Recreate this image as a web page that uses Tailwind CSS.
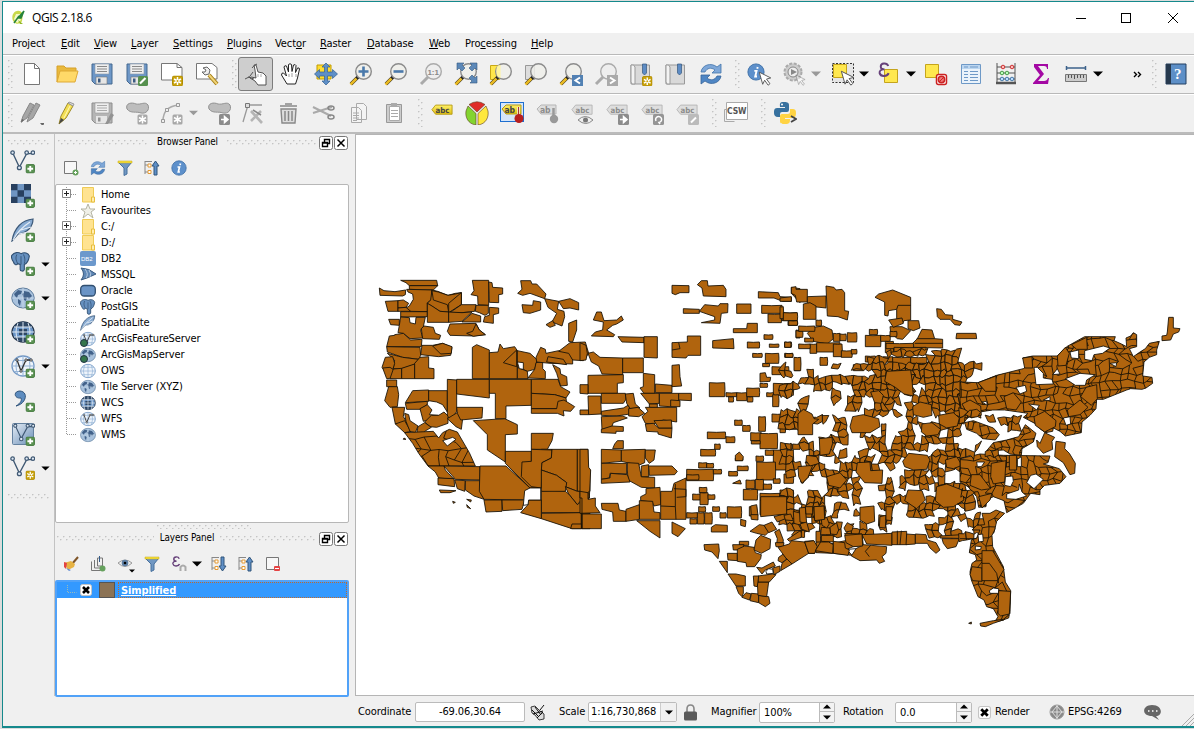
<!DOCTYPE html>
<html lang="en"><head><meta charset="utf-8"><title>QGIS 2.18.6</title>
<script src="https://cdn.jsdelivr.net/npm/@tailwindcss/browser@4"></script></head>
<body class="w-[1194px] h-[729px] overflow-hidden bg-[#dcdcdc] font-['DejaVu_Sans_Condensed','DejaVu_Sans',sans-serif] [font-stretch:condensed] text-[11px] tracking-[-0.1px] text-black">
<svg class="absolute size-0">
<defs>
<pattern id="gv" width="6" height="6" patternUnits="userSpaceOnUse"><path d="M0 0h2v2H0zM3 3h2v2H3z" fill="#fff"/><path d="M0 0h1.6v1.6H0zM3 3h1.6v1.6H3z" fill="#c4c4c4"/></pattern>
<linearGradient id="gy" x2="0" y2="1"><stop stop-color="#fff06a"/><stop offset="1" stop-color="#e0c010"/></linearGradient>
<linearGradient id="gb" x1="0" y1="0" x2="1" y2="1"><stop stop-color="#e6edf5"/><stop offset="1" stop-color="#6a8fb8"/></linearGradient>
<symbol id="plus" viewBox="0 0 10 10"><rect x=".5" y=".5" width="9" height="9" rx="1.5" fill="#5a9152" stroke="#4a7d44"/><path d="M5 2v6M2 5h6" stroke="#fff" stroke-width="2"/></symbol>
<symbol id="star" viewBox="0 0 11 11"><rect x=".5" y=".5" width="10" height="10" rx="1.5" fill="#c9a20c" stroke="#b08c00"/><path d="M5.5 1.5v8M2 3.5l7 4M9 3.5l-7 4" stroke="#fff" stroke-width="1.5"/><circle cx="5.500" cy="5.500" r="1" fill="#c9a20c"/></symbol>
<symbol id="gstar" viewBox="0 0 11 11"><rect x=".5" y=".5" width="10" height="10" rx="1.500" fill="#a8a8a8"/><path d="M5.500 1.500v8M2 3.500l7 4M9 3.500l-7 4" stroke="#fff" stroke-width="1.500"/></symbol>
<symbol id="arr" viewBox="0 0 11 11"><rect width="11" height="11" rx="1.500" fill="#8c8c8c"/><path d="M2 5.500h4M5.500 2.500L9 5.500 5.500 8.500z" fill="#fff" stroke="#fff" stroke-width="1.500"/></symbol>
<symbol id="floppy" viewBox="0 0 24 24"><path d="M2 2h20v20H5l-3-3z" fill="#6d97c8" stroke="#45688f"/><path d="M5 2h14v10H5z" fill="#eee" stroke="#8a99a8" stroke-width=".6"/><path d="M7 4.500h10M7 7h10M7 9.500h10" stroke="#888"/><path d="M6 15h11v7H6z" fill="#e6e6e6" stroke="#777" stroke-width=".6"/><path d="M8 16.500h2.500v4H8z" fill="#3b5a80"/></symbol>
<symbol id="gfloppy" viewBox="0 0 24 24"><path d="M2 2h20v20H5l-3-3z" fill="#b5b5b5" stroke="#8d8d8d"/><path d="M5 2h14v10H5z" fill="#eee" stroke="#999" stroke-width=".6"/><path d="M7 4.500h10M7 7h10M7 9.500h10" stroke="#aaa"/><path d="M6 15h11v7H6z" fill="#e6e6e6"/><path d="M8 16.500h2.500v4H8zM15 23l6-11 3 2-6 9z" fill="#929292"/></symbol>
<symbol id="mag" viewBox="0 0 24 24"><path d="M2 22l7-7" stroke="#222" stroke-width="3.500"/><path d="M1.500 22.500l6-6" stroke="#e8b923" stroke-width="2.600"/><circle cx="14.500" cy="9.500" r="7.800" fill="#eeeeea" fill-opacity=".85" stroke="#8b8b8b" stroke-width="1.400"/></symbol>
<symbol id="gmag" viewBox="0 0 24 24"><path d="M2 22l7-7" stroke="#aaa" stroke-width="3"/><circle cx="14.500" cy="9.500" r="7.800" fill="#eee" stroke="#aaa" stroke-width="1.400"/></symbol>
<symbol id="refresh" viewBox="0 0 24 24"><path d="M2 10C3 3 12 0 18 5l4-3v9h-9l3-3c-4-3-8-2-10 2z" fill="#7ea7d8" stroke="#4375ab" stroke-width=".8"/><path d="M22 14c-1 7-10 10-16 5l-4 3v-9h9l-3 3c4 3 8 2 10-2z" fill="#4f86c4" stroke="#39669b" stroke-width=".8"/></symbol>
<symbol id="info" viewBox="0 0 16 16"><circle cx="8" cy="8" r="7.200" fill="#5d90cb" stroke="#3d6fa6" stroke-width=".8"/><path d="M9.500 3.500l-.4 1.600M6.500 7h2L7.300 12h1.600" stroke="#fff" stroke-width="1.700" fill="none"/></symbol>
<symbol id="cursor" viewBox="0 0 12 13"><path d="M1 1l10 5-3.700 1 3 4-1.600 1.300L5.700 8 4 11.500z" fill="#fff" stroke="#555" stroke-width=".8"/></symbol>
<symbol id="book" viewBox="0 0 24 24"><path d="M2 3h18.500v19H2z" fill="#d9d9d9" stroke="#999"/><path d="M2 3q3-1 4 2v17H3L2 20z" fill="#f3f3f3" stroke="#999"/><path d="M13.500 2h4v9l-2 2-2-2z" fill="#5e8cc4" stroke="#33587f" stroke-width=".7"/></symbol>
<symbol id="tag" viewBox="0 0 24 16"><path d="M1 6l4-5h18v10H5z" fill="url(#gy)" stroke="#b59a16"/><text x="5" y="9.500" font-size="8.500" font-weight="bold" font-family="DejaVu Sans Condensed" fill="#444">abc</text></symbol>
<symbol id="gtag" viewBox="0 0 24 16"><path d="M1 6l4-5h18v10H5z" fill="#dedede" stroke="#b5b5b5"/><text x="5" y="9.500" font-size="8.500" font-weight="bold" font-family="DejaVu Sans Condensed" fill="#8c8c8c">abc</text></symbol>
<symbol id="blob" viewBox="0 0 24 24"><path d="M2 8C0 2 7 1 11 3c5 1 9-3 12 1 2 5-2 9-7 8C11 10 6 13 2 8z" fill="#bdbdbd" stroke="#929292"/></symbol>
<symbol id="vec" viewBox="0 0 24 24"><path d="M3 4.500l6 13L16 4.500h6" fill="none" stroke="#3f5873" stroke-width="1.300"/><g fill="#dfe9f4" stroke="#3f5873" stroke-width="1.200"><circle cx="2.500" cy="3.500" r="1.700"/><circle cx="16" cy="3.500" r="1.700"/><circle cx="22" cy="3.500" r="1.700"/><circle cx="9" cy="18" r="1.900"/></g></symbol>
<symbol id="raster" viewBox="0 0 24 24"><path d="M0 0h20v19H0z" fill="#6f95c2"/><path d="M0 0h6.500v6.300H0zM13 0h7v6.300h-7zM6.500 6.300H13v6.400H6.500zM0 12.700h6.500V19H0zM13 12.700h7V19h-7z" fill="#28405f"/></symbol>
<symbol id="feather" viewBox="0 0 24 24"><path d="M1 23C3 10 11 2 22 1c0 7-5 14-15 15L1 23z" fill="#88abd2" stroke="#3b5878" stroke-width="1.200"/><path d="M2 22Q8 11 19 4M8 16l9-2M10 12l10-3" stroke="#e3ecf5" stroke-width="1.200" fill="none"/></symbol>
<symbol id="eleph" viewBox="0 0 24 24"><path d="M1 4C4 0 9 0 12 2c4-2 9-1 10 3-1 6-3 9-6 10v6c-1 3-5 2-5 0v-6L8 14c-1 2-4 2-5-2C1 9 0 6 1 4z" fill="#6690bf" stroke="#304f71" stroke-width="1.300"/><path d="M7 3c-2 4-1 7 1 11M15 3c2 4 2 7 1 11M12 5v10" fill="none" stroke="#304f71"/></symbol>
<symbol id="globe" viewBox="0 0 24 24"><ellipse cx="12" cy="12" rx="11.200" ry="10" fill="#a9c2dd" stroke="#5e7d9d"/><path d="M3 8l4-4 4 1-1 3-3 1-1 3-2-2zM7 13l3 2-1 5-2-3zM13 5l5 1 3 4-3 3-2-2-1 4-2-1-1-4-1-2 2-1z" fill="#42628a"/><path d="M1 12h22M12 2v20" stroke="#d6e3f0" stroke-width=".6"/></symbol>
<symbol id="wgrid" viewBox="0 0 24 24"><ellipse cx="12" cy="12" rx="11" ry="10" fill="#eef4fb" stroke="#7499c5" stroke-width="1.300"/><path d="M1 12h22M3 6.500h18M3 17.500h18M12 2v20M7 3q-4 9 0 18M17 3q4 9 0 18" fill="none" stroke="#94b3d6"/></symbol>
<symbol id="dgrid" viewBox="0 0 24 24"><ellipse cx="12" cy="12" rx="11" ry="10" fill="#6b95c7" stroke="#24354b" stroke-width="1.300"/><path d="M4 5q8-7 16 0l1 2H3zM8 9h8v6H8zM3 17h18q-8 9-18 0z" fill="#2e4765"/><path d="M1 12h22M3 7h18M3 17h18M12 2v20M7 3q-4 9 0 18M17 3q4 9 0 18" fill="none" stroke="#dce7f2"/></symbol>
<symbol id="wv" viewBox="0 0 24 24"><use href="#wgrid"/><path d="M6 6l4 11 5-11h5" fill="none" stroke="#333" stroke-width="1.300"/><path d="M5 5h2v2H5zM14 5h2v2h-2zM19 5h2v2h-2zM9 16h2v2H9z" fill="#fff" stroke="#333" stroke-width=".8"/></symbol>
<symbol id="folder" viewBox="0 0 16 16"><path d="M2.500.5h11v9l1 1v4.500h-12z" fill="#ffe391" stroke="#efcb55"/><path d="M11.500 15v-5h3v5z" fill="#ffedb0" stroke="#e8be3c"/></symbol>
<symbol id="funnel" viewBox="0 0 16 16"><path d="M1.500 2.500h13L10 8v6l-3 1.500V8z" fill="#7097c2" stroke="#47709d"/><path d="M1 1h14v2H1z" fill="#f9e23c" stroke="#c0a717" stroke-width=".5"/></symbol>
<symbol id="tree" viewBox="0 0 16 16"><path d="M1 1v13M1 5h4M1 12h4M1 1.500h7" stroke="#888" fill="none"/><path d="M4 4h3v3H4zM4 10.500h3v3H4z" fill="#fff" stroke="#e69a32"/></symbol>
<symbol id="eps" viewBox="0 0 20 22"><path d="M15 5C13 0 5 1 5 5.500 5 8 7 9.500 10 9.500 5 9 3 12 3.500 14.500 5 20 14 19 15.500 14.500" fill="none" stroke="#67417a" stroke-width="2.600"/></symbol>
<symbol id="tri" viewBox="0 0 10 6"><path d="M0 .5h10L5 5.500z"/></symbol>
<symbol id="box" viewBox="0 0 12 12"><rect x=".5" y=".5" width="11" height="11" rx="2" fill="#fff" stroke="#c5c5c5"/><path d="M3 3l6 6M9 3L3 9" stroke="#000" stroke-width="2.600"/></symbol>
</defs></svg>

<div class="relative ml-[2px] mt-px w-[1192px] h-[727px] border-l border-t border-b-2 border-[#15898c] bg-[#f0f0f0] flex flex-col">
<header class="h-[31px] shrink-0 bg-white flex items-center font-['Open_Sans','Noto_Sans',sans-serif] [font-stretch:normal] text-[12px]">
<svg class="w-[13px] h-[15px] ml-[9px]" viewBox="0 0 13 15"><path d="M5 1C0 2-1 9 2 12c2 3 7 2 8-1L11 4C9 1 7 0 5 1z" fill="#c9d94b"/><path d="M4 4l-2 5 3 4 4-3-2-3 2-3z" fill="#f4f9c9"/><path d="M6 8l6-7-3 7zM2 13l5-7" stroke="#26833b" stroke-width="1.500" fill="#26833b"/><path d="M6 10l5 4h-3z" fill="#94b82c"/></svg>
<span class="ml-[7px] tracking-[-0.45px] w-[200px]">QGIS 2.18.6</span>
<svg class="ml-auto mr-[14px] w-[104px] h-[12px]" viewBox="0 0 104 12" fill="none" stroke="#000" shape-rendering="crispEdges"><path d="M0 6.500h10"/><rect x="45.500" y="1.500" width="9" height="9"/><path d="M92 1l10 10M102 1L92 11" shape-rendering="auto"/></svg>
</header>
<nav class="h-[21px] shrink-0 flex items-center pt-px pl-[9px] whitespace-nowrap">
<span class="w-[49px]">Pro<u>j</u>ect</span><span class="w-[33px]"><u>E</u>dit</span><span class="w-[37px]"><u>V</u>iew</span><span class="w-[42px]"><u>L</u>ayer</span><span class="w-[54px]"><u>S</u>ettings</span><span class="w-[48px]"><u>P</u>lugins</span><span class="w-[45px]">Vect<u>o</u>r</span><span class="w-[47px]"><u>R</u>aster</span><span class="w-[62px]"><u>D</u>atabase</span><span class="w-[36px]"><u>W</u>eb</span><span class="w-[66px]">Pro<u>c</u>essing</span><span><u>H</u>elp</span>
</nav>
<div class="h-[39px] shrink-0 border-t border-[#b9b9b9] shadow-[inset_0_1px_#fff] flex items-center [&>div]:w-[35px] [&>div]:h-[34px] [&>div]:shrink-0 [&>div]:flex [&>div]:items-center [&>div]:justify-center [&>div>svg]:size-6 [&>svg]:shrink-0">
<svg class="ml-[5px] w-[6px] h-[28px]"><rect width="6" height="28" fill="url(#gv)"/></svg>
<div><svg viewBox="0 0 24 24"><path d="M4.500 1.500h10l5 5v16h-15z" fill="#fff" stroke="#777"/><path d="M14.500 1.500v5h5" fill="none" stroke="#777"/></svg></div>
<div><svg viewBox="0 0 24 24"><path d="M2 20V4h7l2 2h10v4" fill="#e9b93d" stroke="#d6a12a"/><path d="M2 20L5 9h18l-3 11z" fill="#ffd968" stroke="#dea934"/></svg></div>
<div><svg><use href="#floppy"/></svg></div>
<div><svg viewBox="0 0 24 24"><use href="#floppy"/><rect x="13" y="14" width="10" height="10" rx="1.500" fill="#56904e"/><path d="M15 21.500l5.500-5.500" stroke="#fff" stroke-width="2.200"/></svg></div>
<div><svg viewBox="0 0 24 24"><path d="M1.500 1.500H17l5 4v12.500H1.500z" fill="#fff" stroke="#777"/><path d="M17 1.500v4h5" fill="none" stroke="#777"/><use href="#star" x="12" y="13.500" width="11" height="11"/></svg></div>
<div><svg viewBox="0 0 24 24"><path d="M1.500 1.500H17l5 4v11.500H1.500z" fill="#fff" stroke="#777"/><path d="M14 13l8 9" stroke="#a47d12" stroke-width="4"/><path d="M14 13l8 9" stroke="#f0d377" stroke-width="2"/><path d="M8 6l4-1 3 3-1 4-4 1-3-3 3 0 1-2z" fill="#eee" stroke="#666"/></svg></div>
<svg class="ml-[8px] w-[6px] h-[28px]"><rect width="6" height="28" fill="url(#gv)"/></svg>
<div class="rounded-[3px] border border-[#7d7d7d] bg-[#cecece]"><svg viewBox="0 0 24 24"><path d="M11 8l-1-5 2 0 2 7 5 1 3 3v9h-8l-3-4-5-3 1-1 5 1z" fill="#fff" stroke="#444" stroke-width=".9"/><path d="M1 17q5-1 8-7M8 6q2-3 5-4M4 15l6 2" stroke="#555" fill="none"/><path d="M14 12v3M17 12v3" stroke="#888" stroke-width=".7"/></svg></div>
<div><svg viewBox="0 0 24 24"><path d="M8 22L2.500 13q0-2.500 2-2l3 3L5 5q.5-2 2.500-1l2 6V2.500q1.500-1.500 3 0l.5 7 1.500-6.500q2-1 2.500.5l-.5 7 2-4.500q2-.5 2 1l-2 9-2 6z" fill="#fff" stroke="#222"/><path d="M10 12v3M13 11v4M17 12v3" stroke="#777" stroke-width=".7"/></svg></div>
<div><svg viewBox="0 0 24 24"><path d="M3 3h14v14H3z" fill="#ffdc30" stroke="#c09b00"/><path d="M12 1l4 4h-2.500v5H18.500V7.500l5 4.500-5 4.500V14h-5v5H16l-4 4-4-4h2.500v-5h-5v2.500L.5 12l5-4.500V10h5V5H8z" fill="#5e8fc8" stroke="#32608f" stroke-width=".7"/></svg></div>
<div><svg viewBox="0 0 24 24"><use href="#mag"/><path d="M14.500 4.500v10M9.500 9.500h10" stroke="#4a79ab" stroke-width="2.600"/></svg></div>
<div><svg viewBox="0 0 24 24"><use href="#mag"/><path d="M9.500 9.500h10" stroke="#4a79ab" stroke-width="2.600"/></svg></div>
<div><svg viewBox="0 0 24 24"><use href="#gmag"/><text x="8.500" y="12.500" font-size="8" font-weight="bold" font-family="Liberation Sans" fill="#888">1:1</text></svg></div>
<div><svg viewBox="0 0 24 24"><use href="#mag"/><path d="M3 1h7L8 3l3 3-3 3-3-3-2 2zM23 1h-7l2 2-3 3 3 3 3-3 2 2zM23 21h-7l2-2-3-3 3-3 3 3 2-2z" fill="#5c88b8" stroke="#34597f" stroke-width=".6"/></svg></div>
<div><svg viewBox="0 0 24 24"><path d="M1.500 3.500h9v14h-9z" fill="#ffe74b" stroke="#c8a817"/><use href="#mag"/><path d="M7.500 7q0-4 4-4v13q-4-1-4-5z" fill="#fff5a0"/></svg></div>
<div><svg viewBox="0 0 24 24"><path d="M1.500 3.500h9v14h-9z" fill="#ddd" stroke="#999"/><use href="#mag"/></svg></div>
<div><svg viewBox="0 0 24 24"><use href="#mag"/><rect x="13" y="13" width="11" height="11" fill="#5281b3"/><path d="M21 15.500l-4.500 3 4.500 3" stroke="#fff" stroke-width="2" fill="none"/></svg></div>
<div><svg viewBox="0 0 24 24"><use href="#gmag"/><rect x="13" y="13" width="11" height="11" fill="#aaa"/><path d="M16 15.500l4.500 3-4.500 3" stroke="#fff" stroke-width="2" fill="none"/></svg></div>
<div><svg viewBox="0 0 24 24"><use href="#book"/><use href="#star" x="13" y="14" width="10.500" height="10.500"/></svg></div>
<div><svg><use href="#book"/></svg></div><div><svg><use href="#refresh"/></svg></div>
<svg class="ml-[7px] w-[6px] h-[28px]"><rect width="6" height="28" fill="url(#gv)"/></svg>
<div><svg viewBox="0 0 24 24"><use href="#info" x="0" y="1" width="18" height="18"/><use href="#cursor" x="11" y="9" width="14" height="15"/></svg></div>
<div><svg viewBox="0 0 24 24"><circle cx="11" cy="10" r="8.500" fill="#ccc" stroke="#aaa" stroke-width="2" stroke-dasharray="3 1.500"/><circle cx="11" cy="10" r="5" fill="#eee" stroke="#888"/><path d="M9 7l6 3-6 3z" fill="#888"/><use href="#cursor" x="13" y="12" width="11" height="12" opacity=".5"/></svg></div>
<svg class="w-[10px] h-[6px] mr-[4px]" fill="#999"><use href="#tri"/></svg>
<div><svg viewBox="0 0 24 24"><path d="M1.500 1.500h21v19h-21z" fill="#e5e5e5" stroke="#333" stroke-dasharray="2 1.500"/><path d="M2.500 2.500h13v13h-13z" fill="#ffe84f" stroke="#c5a41c"/><use href="#cursor" x="9" y="8" width="15" height="16"/></svg></div>
<svg class="-ml-px mr-[2px] w-[10px] h-[6px]"><use href="#tri"/></svg>
<div><svg viewBox="0 0 24 24"><path d="M7.500 7.500h13v13h-13z" fill="#ffe84f" stroke="#c5a41c"/><use href="#eps" x="0" y="0" width="15" height="17"/></svg></div>
<svg class="mr-[2px] w-[10px] h-[6px]"><use href="#tri"/></svg>
<div><svg viewBox="0 0 24 24"><path d="M1.500 2.500h13v13h-13z" fill="#ffe84f" stroke="#c5a41c"/><rect x="12.500" y="12.500" width="10" height="10" rx="2" fill="#fff" stroke="#c22" stroke-width="1.500"/><circle cx="17.500" cy="17.500" r="3.200" fill="#e77" stroke="#c22" stroke-width="1.500"/><path d="M15 20l5-5" stroke="#c22"/></svg></div>
<div><svg viewBox="0 0 24 24"><path d="M2.500 2.500h19v19h-19z" fill="#eaf3fb" stroke="#6e99c7"/><path d="M3 3h18v4H3z" fill="#bcd6f0"/><path d="M5 5h4M11 5h8M5 9.500h4M11 9.500h8M5 12.500h4M11 12.500h8M5 15.500h4M11 15.500h8M5 18.500h4M11 18.500h8" stroke="#6e99c7"/></svg></div>
<div><svg viewBox="0 0 24 24"><path d="M3 1v20M21 1v20M3 5h18M3 11h18M3 17h18" stroke="#555"/><path d="M2 21h20" stroke="#555" stroke-width="2.500"/><g stroke-width="1" fill="#fbb" stroke="#c33"><circle cx="9" cy="5" r="1.800"/><circle cx="18" cy="5" r="1.800"/><g fill="#bfb" stroke="#4a9a4a"><circle cx="8" cy="11" r="1.800"/><circle cx="13" cy="11" r="1.800"/></g><g fill="#bdf" stroke="#4678a8"><circle cx="8" cy="17" r="1.800"/><circle cx="13" cy="17" r="1.800"/><circle cx="18" cy="17" r="1.800"/></g></g></svg></div>
<div><svg viewBox="0 0 24 24"><path d="M5 2h14v5h-1q0-3-3-3H9l6 8-6 7h6q3 0 4-3h1l-1 6H4v-1l7-8-6-8z" fill="#a308a3"/></svg></div>
<div><svg viewBox="0 0 24 24"><path d="M2 6h20M2.500 4v4M21.500 4v4" stroke="#3d628a" stroke-width="1.500"/><path d="M1.500 12.500h21v7h-21z" fill="#ccc" stroke="#777"/><path d="M4.500 13v3M7.500 13v3M10.500 13v4M13.500 13v3M16.500 13v3M19.500 13v3" stroke="#555"/></svg></div>
<svg class="w-[10px] h-[6px]"><use href="#tri"/></svg>
<svg class="ml-[30px] w-[9px] h-[7px]" viewBox="0 0 9 7"><path d="M1 1l2.500 2.500L1 6M5 1l2.500 2.500L5 6" fill="none" stroke="#000" stroke-width="1.400"/></svg>
<svg class="ml-[10px] w-[6px] h-[28px]"><rect width="6" height="28" fill="url(#gv)"/></svg>
<div><svg viewBox="0 0 24 24"><path d="M2 2h20v20H2z" fill="#5d8fc7" stroke="#244062"/><path d="M2 2h5v20H2z" fill="#26394e"/><text x="10" y="17" font-size="15" font-weight="bold" font-family="Liberation Serif" fill="#fff">?</text></svg></div>
</div>
<div class="h-[39px] shrink-0 border-t border-[#b9b9b9] shadow-[inset_0_1px_#fff] flex items-center [&>div]:w-[35px] [&>div]:h-[34px] [&>div]:shrink-0 [&>div]:flex [&>div]:items-center [&>div]:justify-center [&>div>svg]:size-6 [&>svg]:shrink-0">
<svg class="ml-[5px] w-[6px] h-[28px]"><rect width="6" height="28" fill="url(#gv)"/></svg>
<div><svg viewBox="0 0 24 24"><path d="M1 21l2-6 7-13 4 2-7 13zM7 21l2-6 7-13 4 2-7 13z" fill="#a6a6a6" stroke="#888"/><path d="M1 22l1-4 2 1zM20 22h5l-2.500 3z" fill="#666"/></svg></div>
<div><svg viewBox="0 0 24 24"><path d="M4 23l2-8 7-13 5 3-7 12z" fill="#f3df54" stroke="#a08c2b"/><path d="M13 2l1-1 5 2-1 2z" fill="#ddd" stroke="#999"/><path d="M9 17l6-12" stroke="#fff8bd"/><path d="M4 23l2-6 3 2z" fill="#444"/></svg></div>
<div><svg><use href="#gfloppy"/></svg></div>
<div><svg viewBox="0 0 24 24"><use href="#blob"/><use href="#gstar" x="12" y="13" width="11" height="11"/></svg></div>
<div><svg viewBox="0 0 24 24"><path d="M3 20Q3 6 18 4" fill="none" stroke="#aaa" stroke-width="1.500"/><path d="M1.500 18.500h3v3h-3zM5.500 7.500h3v3h-3zM16.500 2.500h3v3h-3z" fill="#eee" stroke="#999"/><use href="#gstar" x="12" y="13" width="11" height="11"/></svg></div>
<svg class="mr-[3px] w-[9px] h-[6px]" fill="#999"><use href="#tri"/></svg>
<div><svg viewBox="0 0 24 24"><use href="#blob"/><use href="#arr" x="12" y="13" width="11" height="11"/></svg></div>
<div><svg viewBox="0 0 24 24"><path d="M6 4L1 21M6 4h14" stroke="#999" stroke-width="1.300"/><path d="M3.500 2.500h4v4h-4z" fill="#ddd" stroke="#777"/><path d="M9 10l11 12M19 10L9 20" stroke="#b5b5b5" stroke-width="2.600"/><path d="M11 9l8 5" stroke="#888" stroke-width="1.500"/></svg></div>
<div><svg viewBox="0 0 24 24"><path d="M4 8h15l-1 14H5z" fill="#ddd" stroke="#888" stroke-width="1.400"/><path d="M3 5h17M8 3h7M8 10v10M11.500 10v10M15 10v10" stroke="#888" stroke-width="1.500"/></svg></div>
<div><svg viewBox="0 0 24 24"><path d="M1 6l18 9M1 12l19-6" stroke="#aaa" stroke-width="2"/><ellipse cx="19" cy="7" rx="3" ry="2" fill="none" stroke="#888" stroke-width="1.500"/><ellipse cx="19" cy="16" rx="3" ry="2" fill="none" stroke="#888" stroke-width="1.500"/></svg></div>
<div><svg viewBox="0 0 24 24"><path d="M9.500 2.500h7l3 3v13h-10zM4.500 6.500h7l3 3v12h-10z" fill="#f4f4f4" stroke="#aaa"/><path d="M6 12h6M6 14.500h6M6 17h6M6 19.500h4" stroke="#aaa"/></svg></div>
<div><svg viewBox="0 0 24 24"><path d="M4.500 3.500h15v18h-15z" fill="#ccc" stroke="#999"/><path d="M7.500 5.500h10v14h-10z" fill="#fff" stroke="#aaa"/><path d="M9 2h6v3H9zM9 9h7v1H9zM9 12h7v1H9zM9 15h7v1H9z" fill="#aaa"/></svg></div>
<svg class="ml-[7px] w-[6px] h-[28px]"><rect width="6" height="28" fill="url(#gv)"/></svg>
<div><svg viewBox="0 0 24 24"><use href="#tag" x="1" y="3" width="22" height="15"/></svg></div>
<div><svg viewBox="0 0 24 24" stroke="#5c3c1c" stroke-width=".6"><path d="M12 11L4 3.500Q12-2 20 3.500z" fill="#e02c28"/><path d="M11 12.500V24C3 23 0 16 1 10l2-5z" fill="#83d430"/><path d="M13 12.500V24c8-1 11-8 10-14l-2-5z" fill="#ffe83d"/></svg></div>
<div><svg viewBox="0 0 24 24"><rect x=".5" y="1.500" width="23" height="19" fill="#d6e6fa" stroke="#1e6fd0"/><path d="M2 8l4-4h15v9H6z" fill="url(#gy)" stroke="#b59a16"/><text x="4.500" y="11.500" font-size="8.500" font-weight="bold" font-family="DejaVu Sans Condensed" fill="#444">ab</text><path d="M18.500 6v10" stroke="#eee" stroke-width="2.500"/><path d="M18.500 6v10" stroke="#a33" stroke-width="1"/><circle cx="19" cy="17.500" r="4.500" fill="#b81f1f"/></svg></div>
<div><svg viewBox="0 0 24 24"><path d="M2 8l4-4h15v9H6z" fill="#dedede" stroke="#b5b5b5"/><text x="5" y="11.500" font-size="8.500" font-weight="bold" font-family="DejaVu Sans Condensed" fill="#8c8c8c">ab</text><path d="M18.500 7v10" stroke="#999" stroke-width="2.500"/><circle cx="19" cy="18" r="4.200" fill="#999"/></svg></div>
<div><svg viewBox="0 0 24 24"><use href="#gtag" x="1" y="3" width="22" height="15"/><path d="M8 19q7-7 15 0-7 7-15 0z" fill="#eee" stroke="#888"/><circle cx="15.500" cy="19" r="2.500" fill="#777"/></svg></div>
<div><svg viewBox="0 0 24 24"><use href="#gtag" x="1" y="3" width="22" height="15"/><use href="#arr" x="13" y="13" width="11" height="11"/></svg></div>
<div><svg viewBox="0 0 24 24"><use href="#gtag" x="1" y="3" width="22" height="15"/><rect x="13" y="13" width="11" height="11" rx="1.500" fill="#959595"/><path d="M16 20a3 3 0 1 1 3 1.500l1 1.500" fill="none" stroke="#fff" stroke-width="1.500"/></svg></div>
<div><svg viewBox="0 0 24 24"><use href="#gtag" x="1" y="3" width="22" height="15"/><rect x="13" y="13" width="11" height="11" rx="1.500" fill="#bbb"/><path d="M16 21.500l5-5" stroke="#fff" stroke-width="2"/></svg></div>
<svg class="ml-[8px] w-[6px] h-[28px]"><rect width="6" height="28" fill="url(#gv)"/></svg>
<div><svg viewBox="0 0 24 24"><path d="M.5 20.500v-12h5M.500 20.500h10" fill="none" stroke="#aaa"/><path d="M2.500 1.500h21v17h-21z" fill="#fff" stroke="#aaa"/><text x="3" y="13" font-size="8.500" font-weight="bold" font-family="DejaVu Sans Condensed" fill="#555">CSW</text></svg></div>
<svg class="ml-[8px] w-[6px] h-[28px]"><rect width="6" height="28" fill="url(#gv)"/></svg>
<div><svg viewBox="0 0 24 24"><path d="M11 1c-5 0-4 2-4 5h5v1H4c-3 0-3 3-3 5s1 4 4 4h2v-3q0-2 2-2h5q2 0 2-2V4c0-3-3-3-5-3z" fill="#37719f"/><path d="M12 23c5 0 5-2 5-5h-5v-1h7c3 0 4-2 4-5s-1-4-3-4h-3v3q0 2-2 2H9q-2 0-2 2v5c0 3 2 3 5 3z" fill="#ffd343"/><circle cx="9" cy="3.500" r="1" fill="#fff"/><path d="M18 15l5 3-5 3" fill="none" stroke="#444" stroke-width="1.800"/></svg></div>
</div>
<main class="h-[564px] shrink-0 flex border-t-2 border-[#bbb]">
<aside class="w-[52px] shrink-0 border-r border-[#c3c3c3] pt-[6px] pl-[5px] [&>div]:h-[34px] [&>div]:flex [&>div]:items-center [&>div]:pl-[2px] [&>div>svg:first-child]:size-[26px] [&>div>svg:first-child]:shrink-0">
<svg class="w-[41px] h-[6px] -mb-px"><rect width="41" height="6" fill="url(#gv)"/></svg>
<div><svg viewBox="0 0 26 26"><use href="#vec" width="25" height="25" /><use href="#plus" x="15.500" y="15" width="9.500" height="9.500"/></svg></div>
<div><svg viewBox="0 0 26 26"><use href="#raster" x="1" y="1" width="24" height="24"/><use href="#plus" x="15.500" y="15.500" width="9.500" height="9.500"/></svg></div>
<div><svg viewBox="0 0 26 26"><use href="#feather" x="1" y="1" width="24" height="24"/><use href="#plus" x="15.500" y="15.500" width="9.500" height="9.500"/></svg></div>
<div><svg viewBox="0 0 26 26"><use href="#eleph" x="1" y="1" width="20" height="20"/><use href="#plus" x="15.500" y="15.500" width="9.500" height="9.500"/></svg><svg class="ml-[5px] w-[9px] h-[5px]"><use href="#tri"/></svg></div>
<div><svg viewBox="0 0 26 26"><use href="#globe" x="1" y="1" width="24" height="24"/><use href="#plus" x="15.500" y="15.500" width="9.500" height="9.500"/></svg><svg class="ml-[5px] w-[9px] h-[5px]"><use href="#tri"/></svg></div>
<div><svg viewBox="0 0 26 26"><use href="#dgrid" x="1" y="1" width="24" height="24"/><use href="#plus" x="15.500" y="15.500" width="9.500" height="9.500"/></svg></div>
<div><svg viewBox="0 0 26 26"><use href="#wv" x="1" y="1" width="24" height="24"/><use href="#plus" x="15.500" y="15.500" width="9.500" height="9.500"/></svg><svg class="ml-[5px] w-[9px] h-[5px]"><use href="#tri"/></svg></div>
<div><svg viewBox="0 0 26 26"><path d="M6 19c5-3 6-6 5-8-7 1-8-7-1-7C19 5 16 17 6 19z" fill="#5e8dc0" stroke="#31557c"/><use href="#plus" x="15.500" y="15.500" width="9.500" height="9.500"/></svg></div>
<div><svg viewBox="0 0 26 26"><rect x="2.500" y="2.500" width="21" height="21" rx="1" fill="url(#gb)" stroke="#64819f"/><use href="#vec" x="3" y="1" width="22" height="23"/><use href="#plus" x="15.500" y="15.500" width="9.500" height="9.500"/></svg></div>
<div><svg viewBox="0 0 26 26"><use href="#vec" width="25" height="25"/><use href="#star" x="15.500" y="15.500" width="9.500" height="9.500"/></svg><svg class="ml-[5px] w-[9px] h-[5px]"><use href="#tri"/></svg></div>
<svg class="mt-[9px] w-[41px] h-[6px]"><rect width="41" height="6" fill="url(#gv)"/></svg>
</aside>
<section class="w-[298px] shrink-0 flex flex-col">
<div class="h-[17px] shrink-0 flex items-center pl-[3px]"><svg class="w-[90px] h-[6px]"><rect width="90" height="6" fill="url(#gv)"/></svg><span class="w-[79px] text-center text-[9.800px] whitespace-nowrap">Browser Panel</span><svg class="w-[90px] h-[6px]"><rect width="90" height="6" fill="url(#gv)"/></svg><svg class="ml-[2px] w-[30px] h-[14px]" viewBox="0 0 30 14" fill="none" stroke="#000"><rect x=".5" y=".5" width="13" height="13" rx="2" fill="#fff" stroke="#777"/><rect x="15.500" y=".5" width="13" height="13" rx="2" fill="#fff" stroke="#777"/><path d="M3.500 6.500h5v4h-5zM5.500 6V3.500h5v4h-2M3 7h6M5 3.500h6" stroke-width="1.400"/><path d="M18.500 3.500l7 7M25.500 3.500l-7 7" stroke-width="1.500"/></svg></div>
<div class="h-[33px] shrink-0 flex items-center gap-[11px] pl-[8px] [&>svg]:size-4">
<svg viewBox="0 0 16 16"><path d="M1.500 1.500h12v12h-12z" fill="#f7f7f7" stroke="#777"/><circle cx="12.500" cy="12.500" r="3" fill="#66a15d"/><path d="M12.500 11v3M11 12.500h3" stroke="#fff"/></svg><svg><use href="#refresh"/></svg><svg><use href="#funnel"/></svg><svg viewBox="0 0 16 16"><use href="#tree"/><path d="M11.500 1L8 6h2v9h3V6h2z" fill="#5f8fc6" stroke="#31557b"/></svg><svg><use href="#info"/></svg></div>
<div class="relative w-[294px] h-[339px] shrink-0 border border-[#b7b7b7] rounded-[2px] bg-white pt-[2px] [&>div]:h-4 [&>div]:flex [&>div]:items-center [&>div]:gap-[5px] [&>div]:pl-[24px] [&>div>svg]:size-4 [&>div>span]:leading-4">
<svg class="absolute left-[4px] top-0 w-[18px] h-[256px]" fill="none"><path d="M6.500 2v248" stroke="#999" stroke-dasharray="1 1"/><path d="M7 9.500h9M7 25.500h9M7 41.500h9M7 57.500h9M7 73.500h9M7 89.500h9M7 105.500h9M7 121.500h9M7 137.500h9M7 153.500h9M7 169.500h9M7 185.500h9M7 201.500h9M7 217.500h9M7 233.500h9M7 249.500h9" stroke="#999" stroke-dasharray="1 1"/><path d="M2.500 4.500h8v8h-8zM2.500 36.500h8v8h-8zM2.500 52.500h8v8h-8z" fill="#fff" stroke="#888"/><path d="M4 8.500h5M6.500 6v5M4 40.500h5M6.500 38v5M4 56.500h5M6.500 54v5" stroke="#222"/></svg>
<div><svg><use href="#folder"/></svg><span>Home</span></div>
<div><svg viewBox="0 0 16 16"><path d="M8 1l2 5h5l-4 3 2 6-5-4-5 4 2-6-4-3h5z" fill="#f0f0e8" stroke="#b5b5a4"/></svg><span>Favourites</span></div>
<div><svg><use href="#folder"/></svg><span>C:/</span></div>
<div><svg><use href="#folder"/></svg><span>D:/</span></div>
<div><svg viewBox="0 0 16 16"><rect width="16" height="15" rx="2" fill="#6c98cc"/><text x="1" y="9.500" font-size="6" font-family="Liberation Sans" fill="#fff">DB2</text></svg><span>DB2</span></div>
<div><svg viewBox="0 0 16 16"><path d="M1 1q8 0 15 6-8 4-15 6 5-6 0-12z" fill="#5f87b5" stroke="#3d5d82"/><path d="M5 2q4 5 1 9M9 3q3 4 1 7" stroke="#b5cae2" fill="none"/></svg><span>MSSQL</span></div>
<div><svg viewBox="0 0 16 16"><rect x=".7" y="2.500" width="14.600" height="10.500" rx="3.500" fill="#6a94c6" stroke="#314f70" stroke-width="1.300"/></svg><span>Oracle</span></div>
<div><svg><use href="#eleph"/></svg><span>PostGIS</span></div>
<div><svg><use href="#feather"/></svg><span>SpatiaLite</span></div>
<div><svg viewBox="0 0 16 16"><use href="#wv" width="16" height="16"/><circle cx="4" cy="12" r="3.500" fill="#35764c" stroke="#234"/></svg><span>ArcGisFeatureServer</span></div>
<div><svg viewBox="0 0 16 16"><use href="#globe" width="16" height="16"/><circle cx="4" cy="12" r="3.500" fill="#35764c" stroke="#234"/></svg><span>ArcGisMapServer</span></div>
<div><svg><use href="#wgrid"/></svg><span>OWS</span></div>
<div><svg><use href="#globe"/></svg><span>Tile Server (XYZ)</span></div>
<div><svg><use href="#dgrid"/></svg><span>WCS</span></div>
<div><svg><use href="#wv"/></svg><span>WFS</span></div>
<div><svg><use href="#globe"/></svg><span>WMS</span></div>
</div>
<svg class="mx-auto mt-[2px] w-[94px] h-[4px] shrink-0"><rect width="94" height="4" fill="url(#gv)"/></svg>
<div class="h-[15px] mt-[2px] shrink-0 flex items-center pl-[2px]"><svg class="w-[97px] h-[6px]"><rect width="97" height="6" fill="url(#gv)"/></svg><span class="w-[66px] text-center text-[9.800px] whitespace-nowrap">Layers Panel</span><svg class="w-[96px] h-[6px]"><rect width="96" height="6" fill="url(#gv)"/></svg><svg class="ml-[3px] w-[30px] h-[14px]" viewBox="0 0 30 14" fill="none" stroke="#000"><rect x=".5" y=".5" width="13" height="13" rx="2" fill="#fff" stroke="#777"/><rect x="15.500" y=".5" width="13" height="13" rx="2" fill="#fff" stroke="#777"/><path d="M3.500 6.500h5v4h-5zM5.500 6V3.500h5v4h-2M3 7h6M5 3.500h6" stroke-width="1.400"/><path d="M18.500 3.500l7 7M25.500 3.500l-7 7" stroke-width="1.500"/></svg></div>
<div class="h-[34px] pt-px shrink-0 flex items-center gap-[11px] pl-[8px] [&>svg]:size-4 [&>svg]:shrink-0">
<svg viewBox="0 0 16 16"><path d="M15 1l-6 7" stroke="#7e5427" stroke-width="2"/><path d="M1 7l7-2 4 3-1 3-6 3z" fill="#e7b343"/><path d="M1 6l3 1-1 6-2-2z" fill="#e24343"/><path d="M3 12l5 2-2 1z" fill="#5c87d2"/></svg>
<svg viewBox="0 0 16 16"><path d="M1.500 5.500v9h9M4.500 4v8h8M7.500 2v8h5V2z" fill="none" stroke="#777"/><path d="M9.500 0v6" stroke="#345b8a"/><circle cx="12.500" cy="12.500" r="3" fill="#66a15d"/></svg>
<svg class="overflow-visible" viewBox="0 0 16 16"><path d="M1 7q7-6 14 0-7 7-14 0z" fill="#eee" stroke="#999"/><circle cx="8" cy="7" r="3.300" fill="#5e7fa4"/><circle cx="8" cy="7" r="1.300"/><path d="M12 13.500h6l-3 3z"/></svg>
<svg><use href="#funnel"/></svg>
<svg viewBox="0 0 16 16"><use href="#eps" width="11" height="12"/><path d="M9.500 15v-4q2.500-3 5 0v4" fill="none" stroke="#aaa" stroke-width="2"/></svg>
<svg class="-ml-[6px] !w-[10px] !h-[6px]"><use href="#tri"/></svg>
<svg class="-ml-[2px]" viewBox="0 0 16 16"><use href="#tree"/><path d="M11.500 15L8 10h2V1h3v9h2z" fill="#5f8fc6" stroke="#31557b"/></svg>
<svg viewBox="0 0 16 16"><use href="#tree"/><path d="M11.500 1L8 6h2v9h3V6h2z" fill="#5f8fc6" stroke="#31557b"/></svg>
<svg viewBox="0 0 16 16"><path d="M1.500 1.500h12v12h-12z" fill="#f7f7f7" stroke="#777"/><rect x="9" y="10" width="6" height="5" rx="1" fill="#e54444"/><path d="M10 12.500h4" stroke="#fff"/></svg></div>
<div class="w-[294px] h-[117px] shrink-0 border-2 border-[#51a2f8] rounded-[2px] bg-white"><div class="h-[16px] bg-[#3399ff] flex items-center"><svg class="ml-[10px] w-[10px] h-[10px]"><path d="M.5 0v7.500h9" fill="none" stroke="#9bb" stroke-dasharray="1 1"/></svg><svg class="ml-[3px] w-[12px] h-[12px]"><use href="#box"/></svg><span class="ml-[7px] size-[16px] bg-[#8c7355] border border-[#555]"></span><span class="ml-[3px] flex-1 h-4 leading-[15px] pl-[2px] border border-dotted border-[#c06a2d] font-bold underline text-white">Simplified</span></div></div>
</section>
<div class="ml-[2px] flex-1 h-[562px] border border-[#b5b5b5] bg-white"><svg class="block w-[838px] h-[560px] overflow-hidden" viewBox="356 135 838 560"><g id="map" fill="#b0640e" stroke="#151007" stroke-linejoin="round"></g></svg></div>
</main>
<footer class="flex-1 flex items-center pt-[2px] whitespace-nowrap">
<span class="ml-[355px] w-[57px]">Coordinate</span><span class="w-[110px] h-5 bg-white border border-[#bbb] rounded-[2px] text-center leading-[18px]">-69.06,30.64</span>
<svg class="ml-[5px] w-[16px] h-[17px]" viewBox="0 0 16 17"><path d="M1 3l4-1 5 5 4 3v5l-5 1-4-5-3-2z" fill="#ddd" stroke="#111" stroke-width=".8"/><path d="M2 6l6 6M5 3l6 8M10 6l4-5M3 10l10-3M7 14l6-6" stroke="#111"/></svg>
<span class="ml-[13px] w-[29px]">Scale</span><span class="w-[89px] h-5 bg-white border border-[#bbb] rounded-[2px] leading-[18px] pl-[2px] flex">1:16,730,868<span class="ml-auto w-[16px] bg-[#f0f0f0] border-l border-[#ccc] flex items-center justify-center"><svg class="w-[8px] h-[5px]"><use href="#tri"/></svg></span></span>
<svg class="ml-[7px] w-[13px] h-[17px]" viewBox="0 0 13 17"><path d="M3 8V5q0-4 3.500-4T10 5v3" fill="none" stroke="#888" stroke-width="1.600"/><rect y="7.500" width="13" height="9" rx="1.500" fill="#5a5a5a"/></svg>
<span class="ml-[14px] w-[48px]">Magnifier</span><span class="w-[76px] h-[21px] bg-white border border-[#bbb] rounded-[2px] leading-[19px] pl-[4px] flex">100%<span class="ml-auto w-[15px] bg-[#f3f3f3] border-l border-[#bbb] flex flex-col items-center justify-around"><svg class="w-[8px] h-[5px] rotate-180"><use href="#tri"/></svg><span class="h-px w-full bg-[#bbb]"></span><svg class="w-[8px] h-[5px]"><use href="#tri"/></svg></span></span>
<span class="ml-[8px] w-[52px]">Rotation</span><span class="w-[77px] h-[21px] bg-white border border-[#bbb] rounded-[2px] leading-[19px] pl-[4px] flex">0.0<span class="ml-auto w-[15px] bg-[#f3f3f3] border-l border-[#bbb] flex flex-col items-center justify-around"><svg class="w-[8px] h-[5px] rotate-180"><use href="#tri"/></svg><span class="h-px w-full bg-[#bbb]"></span><svg class="w-[8px] h-[5px]"><use href="#tri"/></svg></span></span>
<svg class="ml-[6px] w-[13px] h-[13px]"><use href="#box"/></svg><span class="ml-[4px] w-[54px]">Render</span>
<svg class="w-[16px] h-[16px]" viewBox="0 0 16 16"><circle cx="8" cy="8" r="7" fill="#888" stroke="#999"/><path d="M1 8h14M8 1v14M8 2L3 8l5 6 5-6z" fill="none" stroke="#ddd"/></svg><span class="ml-[3px] w-[57px]">EPSG:4269</span>
<svg class="ml-[19px] w-[17px] h-[15px]" viewBox="0 0 17 15"><path d="M8 0c11 0 11 11 4 11l3 4-7-4C-3 11-2 0 8 0z" fill="#666"/><path d="M4 6h1.500M8 6h1.500M12 6h1.500" stroke="#fff" stroke-width="1.500"/></svg>
<svg class="ml-auto self-end w-[12px] h-[12px]"><path d="M0 12L12 0M4 12l8-8M8 12l4-4" stroke="#aaa"/></svg>
</footer>
</div>
<script>
// County layer: polygon lists per map sheet, one "x,y x,y ..." ring per entry.
const NS='http://www.w3.org/2000/svg', map=document.getElementById('map');
function sheet(x,y){const g=document.createElementNS(NS,'g');g.setAttribute('transform',`translate(${x} ${y}) scale(.33333)`);g.setAttribute('stroke-width','2.6');map.appendChild(g);return g}
function el(g,t,a){const e=document.createElementNS(NS,t);for(const k in a)e.setAttribute(k,a[k]);g.appendChild(e);return e}
let seed=7;const rnd=()=>(seed=(seed*16807)%2147483647)/2147483647;
const polys=(g,s,fill)=>s.trim().split('|').forEach(p=>el(g,'polygon',fill?{points:p.trim(),fill}:{points:p.trim()}));
const lines=(g,s)=>s.trim().split('|').forEach(p=>el(g,'polyline',{points:p.trim(),fill:'none'}));
const rects=(g,s)=>s.trim().split('|').forEach(p=>{const [a,b,c,d]=p.trim().split(/[ ,]+/).map(Number);polys(g,`${a},${b} ${(a+c)/2},${b+1} ${c},${b} ${c+1},${(b+d)/2} ${c},${d} ${a},${d}`)});
let cid=0;
function meshed(g,ring,step,holes){
 polys(g,ring);const id='clip'+(cid++);const cp=el(g,'clipPath',{id});ring.split('|').forEach(p=>el(cp,'polygon',{points:p.trim()}));
 const n=ring.match(/-?\d+/g).map(Number),xs=n.filter((_,i)=>i%2==0),ys=n.filter((_,i)=>i%2);
 const m=el(g,'g',{'clip-path':`url(#${id})`}),x0=Math.min(...xs)-step,y0=Math.min(...ys)-step,x1=Math.max(...xs)+step,y1=Math.max(...ys)+step,P=[];
 for(let y=y0,r=0;y<=y1;y+=step,r++){P[r]=[];for(let x=x0;x<=x1;x+=step)P[r].push([x+(r%2)*step*.35+(rnd()-.5)*step*.75,y+(rnd()-.5)*step*.75])}
 let d='';for(let r=0;r<P.length;r++)for(let c=0;c<P[r].length;c++){const q=P[r][c];if(c+1<P[r].length&&rnd()<.86)d+=`M${q}L${P[r][c+1]}`;if(r+1<P.length&&rnd()<.78)d+=`M${q}L${P[r+1][c]}`}
 el(m,'path',{d,fill:'none'});if(holes)polys(g,holes,'#fff')}
function cells(g,rows,s=20){
 const J=(a,b)=>{const h=Math.sin(a*127.1+b*311.7)*43758.5;return (h-Math.floor(h)-.5)*s*.76};
 rows.trim().split('\n').forEach(l=>{let [y,iv]=l.split(':');y=+y;iv.split(',').forEach(v=>{const [a,b]=v.split('-').map(Number);
  for(let c=Math.round(a/s);c<Math.round(b/s);c++){const x=c*s,t=y-10,pt=(X,Y)=>`${X+J(X,Y)},${Y+J(Y,X)}`;
   const mid=`${x+s/2+J(x+3,t)*.6},${t+J(x,t+5)*.6}`;const mid2=`${x+s/2+J(x+3,t+s)*.6},${t+s+J(x,t+s+5)*.6}`;
   polys(g,`${pt(x,t)} ${mid} ${pt(x+s,t)} ${pt(x+s,t+s)} ${mid2} ${pt(x,t+s)}`)}})})}

let g=sheet(370,270);
polys(g,`28,54 42,62 75,65 107,60 106,74 98,78 30,76|92,31 200,31 203,47 118,47 108,38|118,47 203,47 190,60 118,58|110,58 186,60 184,90 172,98 172,125 122,124 100,118 118,108 130,88 128,72 114,66|46,94 84,92 84,124 54,124|84,92 100,90 116,100 108,112 84,114|84,114 108,112 122,124 84,124|92,125 172,125 172,140 92,141
|186,60 203,64 234,76 256,70 274,68 274,100 236,126 210,124 172,100 182,90|172,100 186,108 210,124 236,126 236,157 172,157|186,62 190,90 232,104 236,126 274,104 274,68 256,72 234,76 205,66|236,100 274,68 274,104 236,128|274,104 318,104 314,124 276,128 240,128|236,126 276,128 306,126 276,154 236,157|306,130 332,138 332,156 276,156|307,31 356,31 356,106 324,104 323,78 303,74 312,62|356,36 366,38 368,52 398,54 398,72 386,74 386,98 358,97|318,106 355,106 355,130 345,136 328,128 316,124|358,112 386,114 386,130 370,134 370,160 340,156 344,140 358,136|240,162 318,160 328,180 346,194 310,198 240,196 232,184|290,190 308,184 318,162 328,180 346,194 310,199
|56,148 88,148 88,166 62,164|92,141 118,143 120,158 136,162 138,142 166,142 160,170 152,180 158,204 120,206 100,190 84,188 88,166|154,176 162,168 190,172 196,190 212,196 208,208 158,206|74,194 100,190 122,210 156,208 154,230 50,230 58,198 74,196|156,226 188,226 218,220 246,232 242,256 206,260 152,254|188,228 218,220 246,230 244,250 212,252|50,230 150,232 152,256 146,268 98,262 52,246|52,250 98,262 146,268 132,284 92,297 70,296 74,270|46,262 68,260 74,280 68,300 50,310 36,292|38,294 60,292 72,300 68,324 50,326|70,297 95,295 95,326 60,326|95,295 134,282 134,326 95,326|134,280 150,262 176,260 176,294 192,296 192,326 134,326|50,330 80,330 80,352 50,350|56,350 82,350 86,374 82,410 60,412 44,392
|66,412 104,412 100,440 114,462 76,462|128,362 176,360 176,394 106,398|176,362 232,362 232,426 218,404 200,396 176,392|106,400 172,394 172,404 150,418 110,418|232,328 260,330 260,424 246,446 232,442|150,416 172,404 186,420 178,434 206,436 198,444 160,454|184,436 206,436 222,426 234,438 234,460 200,472 180,470 164,456|232,446 268,424 278,446 274,478 258,470|76,462 104,452 122,484 104,488|104,430 116,434 120,452 144,468 136,488 120,484 108,454|144,470 164,458 184,472 164,484 156,496 140,492|260,412 338,412 336,444 272,450 262,430|310,452 404,446 442,464 442,492 406,494 406,576 352,540 352,494|406,544 484,544 484,574 514,574 514,654 480,654 406,580|484,490 550,490 546,512 532,538 484,538`);
meshed(g,'104,488 190,484 206,504 218,488 238,478 262,486 298,548 316,588 174,588 146,550 128,520',30,'218,512 248,502 258,508 232,528');
polys(g,`174,588 222,588 226,600 252,628 206,624 196,606|204,624 252,626 254,650 204,644|222,588 330,590 330,630 256,628|254,630 286,632 284,664 262,656|286,632 330,632 334,664 342,688 312,678 286,660|330,588 408,588 480,654 464,690 342,688 328,664|342,690 396,690 396,724 348,726|396,690 464,690 456,718 398,722|208,660 258,662 240,668 212,668|290,688 304,690 302,696|290,704 302,716 292,712|248,694 256,697 250,700|102,504 108,508 100,508
|260,328 358,328 358,384 260,372|358,328 484,328 484,406 408,408 408,446 376,446 376,370 358,370|484,328 564,328 572,350 600,366 588,384 554,374 484,370|484,370 554,374 588,384 590,400 570,416 484,416|484,416 560,416 564,394 582,390 614,410 602,424 580,422 582,438 562,430 484,430
|307,232 320,224 358,240 358,326 307,326|358,248 384,246 390,222 400,236 434,230 442,242 442,326 358,326|400,278 440,240 440,290|442,242 480,250 502,270 494,298 472,304 442,290|442,292 472,304 474,326 442,326|474,324 494,298 498,278 518,276 518,296 526,304 526,326|498,262 512,232 526,238 528,250 566,242 600,246 608,270 608,282 540,280 500,276|566,244 600,218 646,216 656,250 640,272 608,270 596,250|596,160 620,150 620,180 608,216 596,214|530,276 534,260 580,268 590,284|443,70 456,58 452,32 482,32 486,42 500,42 528,72 524,86 480,70 458,76|524,86 566,94 562,118 582,124 584,140 576,168 546,156 560,130 534,112|566,94 600,86 626,98 626,120 600,114 580,116|456,104 488,106 490,92 512,96 512,120 480,130 460,128|528,164 548,152 556,166 540,172|548,284 570,296 572,312 590,320 592,346 572,348 560,310
|514,538 546,538 546,564 516,578|484,538 546,540 544,564 516,578 514,654 484,650 454,620 456,576 484,574|546,538 622,538 622,664 586,650 590,638 560,616 514,600 516,578 544,564|514,600 560,616 590,638 586,664 550,668 514,664|622,538 654,538 654,592 660,600 660,664 622,664|586,650 622,664 656,664 656,680 634,690 622,704 596,672|514,664 586,664 596,672 622,704 634,694 634,728 514,728|634,690 656,680 660,728 634,728|514,730 634,728 634,776 606,776 514,746|634,728 660,730 660,776 634,776|452,728 474,704 474,690 514,690 514,746|606,762 634,762 634,776 602,776`);
polys(g,'442,276 460,278 460,298 448,296','#fff');polys(g,'464,662 480,654 512,654 512,690 476,690 474,704 460,706','#fff');

g=sheet(580,270);
polys(g,`276,46 327,47 327,68 300,68 286,74 276,70|352,44 364,32 382,32 384,48 430,46 438,58 438,80 370,78 366,54|310,116 358,118 358,130 310,130|358,124 374,104 415,108 420,101 444,101 443,128 424,130 420,160 364,158 404,150 404,140|470,102 513,102 513,130 470,130|460,176 500,176 502,160 532,160 532,188 460,188|398,212 460,206 462,236 398,234|535,65 595,68 600,80 634,82 634,94 608,94 582,84 535,84|634,52 660,56 660,98 634,70|40,150 50,126 64,126 72,152 110,150 124,138 130,150 110,162 98,166 80,180 104,194 100,200 34,198 46,186 68,180 70,156
|114,200 192,202 192,218 126,216|192,200 232,200 232,264 192,262|276,218 322,216 322,198 362,198 362,256 324,256 318,264 276,262|0,218 18,226 22,250 18,270 0,272|24,250 40,246 60,262 128,264 128,314 66,312 56,288 34,276|128,264 190,264 190,308 128,308|24,316 130,314 130,338 112,340 112,370 24,370|0,344 24,344 24,372 0,370|190,310 224,314 224,370 192,370 180,354 190,350|226,342 276,346 276,368 226,368|276,286 298,284 300,320 305,348 276,350|182,370 238,370 238,400 208,402|238,370 296,370 298,390 270,410 238,408|296,370 334,370 334,392 296,390|208,402 232,402 232,414 208,412|272,390 300,392 300,410 272,410|196,412 290,412 290,456 250,450 220,462 196,460 186,440 204,424|196,462 220,460 236,474 276,474 274,504 234,492 234,486 200,484|222,452 274,450 276,474 236,474
|0,420 26,420 26,434 0,434|64,370 136,370 138,388 130,400 64,400|24,378 62,378 64,432 26,434|136,372 160,370 166,402 180,414 150,416 140,400|64,424 130,414 144,406 150,416 150,432 110,438 64,436|146,416 174,412 194,430 176,440 146,438|64,440 128,438 142,444 100,458 94,474 66,480|64,478 96,468 130,470 130,484 108,484 108,490 64,488|98,536 104,522 112,512 130,512 130,536|0,538 24,538 26,592 32,600 28,684 0,684|64,538 124,540 124,574 64,580|124,540 196,538 194,578 176,586 124,574|196,540 226,540 222,570 208,580 196,564|64,580 140,580 140,612 90,610 88,624 64,628|142,578 176,580 184,620 224,622 224,654 184,652 144,630 142,600|184,588 206,584 206,620 184,620|206,588 276,588 292,604 284,614 208,616|64,628 90,624 92,610 142,614 150,636 64,640
|198,656 240,652 242,704 222,708 216,696 182,692 182,680 198,672|242,664 276,664 282,640 318,624 318,748 242,748|178,692 218,694 222,726 240,728 240,748 178,748|64,700 114,700 118,720 138,724 138,754 100,754 98,726 66,718|138,718 178,704 178,748 138,754|170,752 240,752 240,804 210,784|276,756 316,776 294,800 276,790|0,664 24,668 24,688 46,684 46,708 60,728 0,730|6,732 64,732 64,776 6,776`);
lines(g,'242,708 286,710 288,748|286,642 286,710|282,656 318,658 318,680 290,682|276,240 300,236 296,218|0,684 6,684 6,776|26,664 28,684');
rects(g,`545,106 606,130|564,132 604,158|606,128 650,152|624,154 652,166|552,194 578,208|502,216 538,234|568,222 596,232|614,216 634,232|518,250 546,262|614,250 638,262|556,250 596,280|548,280 568,290|576,290 626,314|648,180 660,204|644,264 660,302|540,340 562,352|388,338 434,380|438,368 470,380|470,368 500,392|500,354 538,380|446,380 460,396|502,380 518,396|580,340 640,376|560,368 580,380|578,374 596,410|464,450 486,466|488,466 510,484|536,440 556,484|382,486 436,506|438,500 464,518|512,488 544,512|540,490 592,536|404,522 420,538|362,538 406,558|514,512 540,522|576,432 610,456|610,428 650,478|600,462 616,488|618,522 636,538|638,522 660,538|528,558 550,574|580,540 640,600|556,540 580,556|356,578 380,594|380,580 400,594|320,598 400,632|400,598 424,612|320,614 356,630|472,588 504,602|446,604 472,618|530,576 586,630|498,630 524,656|526,628 550,660|466,564 488,572|490,658 532,690|550,642 574,658|580,626 600,640|612,612 640,640|358,652 380,668|338,672 362,690|360,668 384,704|384,674 404,688|356,710 376,726|398,710 418,724|320,728 352,744|352,728 372,762|374,728 396,762|330,746 350,762|420,728 438,744|442,710 484,744|540,690 610,734|508,710 530,738|540,670 600,690|600,660 640,680|610,690 636,712|612,720 660,738`);
polys(g,'540,310 556,308 560,322 572,322 570,334 540,336|466,556 478,546 490,560 488,572 466,572|458,640 480,630 484,642');

g=sheet(780,270);
polys(g,`34,52 48,50 48,58 82,58 82,96 50,96 46,76 34,70|82,80 138,78 138,114 100,110 82,98|70,102 90,98 108,108 108,148 70,148|138,48 162,52 168,60 186,58 194,68 194,122 206,124 202,150 174,140 142,138|0,84 34,80 34,94 0,94|285,82 296,72 338,60 392,82 392,150 372,152 368,160 350,146 350,118 326,122 324,138 314,136 314,96|470,116 484,118 496,134 518,136 518,148 546,156 540,166 524,164 510,148 480,148 472,140|530,190 588,190 590,206 528,206|384,152 416,152 420,174 400,182 384,176|426,178 456,180 464,206 488,208 488,234 400,232 396,222 412,206|330,170 366,170 392,182 368,208 352,206 332,188|326,150 366,144 370,160 340,172
|100,172 130,168 156,180 160,206 142,222 100,214 82,190`);
lines(g,'350,118 354,106 392,106|410,206 464,206|404,220 488,220');
rects(g,`108,150 124,168|48,182 68,202|56,168 104,184|74,204 100,216|160,190 180,214|180,192 198,212|202,188 230,216|268,178 292,194|256,196 302,230|0,110 10,146|10,128 52,152|26,152 52,166|14,216 32,232|90,222 110,250|110,218 180,246|56,222 90,236|120,262 142,286|160,222 186,260|184,242 216,262|214,238 230,252|16,250 38,262|42,262 62,302|302,196 330,214|330,184 350,200|316,214 340,248|318,220 400,236|342,232 438,248|310,260 338,276|338,262 392,292|392,262 440,280|392,280 458,296|256,258 286,276|220,284 250,302|296,292 322,306`);
cells(g,`250:318-440,460-535
270:260-320,440-540
290:0-25,160-180,220-590
310:0-30,80-100,270-570
330:60-230,240-560
350:0-50,90-160,220-400,430-540
370:0-30,150-180,220-350,370-400,420-560
390:50-70,150-175,190-230,270-350,400-600
410:60-80,190-230,280-340,380-400,440-600
430:0-50,260-310,330-355,370-400,460-480,500-590
450:0-60,100-140,155-200,375-420,480-560
470:0-60,150-200,300-320,370-400,420-540
490:180-200,240-260,300-320,360-400,430-480,500-540
510:60-80,120-200,260-320,340-400,420-490,500-520
530:0-40,60-100,120-150,260-310,330-440,500-530
550:0-20,80-150,180-200,240-260,290-380,460-550
570:0-40,80-120,160-180,220-280,300-350,370-400,440-540
590:10-60,80-140,180-210,220-290,320-340,440-470,490-560
610:10-35,60-95,110-215,230-250,370-440,460-500
630:60-80,140-200,220-240,320-340,350-460,480-500
650:140-210,220-240,300-340,350-380,420-430,450-550
670:0-40,80-110,145-205,220-240,310-345,430-440,470-550
690:0-60,70-110,120-140,220-240,310-380,430-550
710:0-30,60-90,100-140,150-200,300-340,380-520
730:0-130,150-180,220-240,370-460,500-530
750:0-70,100-150,300-335,480-520
770:20-90,120-180,195-215,240-260,300-320,430-475,490-520
790:40-80,140-180,200-270,430-480,490-540`);
polys(g,`320,304 392,300 396,330 400,378 372,372 346,352 314,334|54,432 70,418 96,432 102,446 116,448 98,462 98,494 54,494|210,470 218,440 250,434 296,446 300,470 270,488 216,488|272,366 296,362 310,376 304,400 284,398|398,410 420,396 454,404 456,436 430,442 400,434|426,462 456,458 482,478 474,494 440,498 424,486|476,436 520,428 538,444 532,468 500,474 478,462|544,396 570,390 600,404 598,430 560,434 540,422|118,506 156,502 158,520 148,552 120,556|232,578 270,576 272,602 308,600 306,640 254,638 228,606|368,574 386,550 442,556 450,570 440,598 400,600 374,590|470,650 500,642 546,660 552,690 520,710 490,712 466,692|384,660 426,662 436,690 410,716 374,692|240,712 282,708 284,754 260,762 240,750|300,740 318,736 316,774 298,772|318,710 338,710 334,752 318,750|140,620 180,608 200,630 180,654 146,646|54,590 98,586 84,622 66,640 56,620|80,556 110,560 118,580 90,588 78,572|496,570 530,560 546,586 520,596 500,592|100,712 134,708 132,744 108,756 98,734`);
polys(g,`74,814 100,812 112,830 104,850 84,850|108,820 128,794 146,798 150,822 160,826 158,850 108,848|150,822 196,812 230,826 200,838 216,856 160,850|194,790 246,792 250,826 230,828 204,818|246,794 336,790 336,826 260,822|228,836 250,824 320,830 318,850 306,860 314,874 298,880 290,870 240,872 214,858|336,786 380,784 380,824 336,824|380,792 406,794 406,822 378,824|406,792 438,794 442,810 468,818 480,840 468,850 450,834 442,820 406,820|486,806 538,806 528,830 502,836 490,820|480,798 578,792 578,806 480,804`);
lines(g,'272,826 256,844 268,860|352,782 352,824|364,782 360,824|204,838 228,836');

g=sheet(960,300);
meshed(g,`0,246 54,248 110,226 190,206 202,196 188,174 218,168 292,168 320,140 374,110 466,110 462,122 480,130 500,140 498,114 512,108 520,98 530,104 530,140 508,146 520,170 540,156 556,146 568,130 598,124 590,150 590,164 568,172 552,186 548,228 576,232 578,250 558,264 546,268 512,266 500,270 430,298 410,298 408,326 390,346 366,366 364,398 316,408 300,394 280,384 278,394 256,398 240,386 224,370 190,352 204,340 134,330 98,330 60,336 54,348 0,344`,21,`330,156 356,150 356,176 334,174|374,152 430,138 450,144 428,160 402,164 396,182 374,178|222,202 232,202 250,220 250,234 276,238 280,252 228,254|316,236 360,220 406,224 380,240 376,256 346,256|168,262 196,256 200,274 180,282|206,312 238,316 230,330|450,190 470,188 468,200|250,300 270,290 270,302|278,224 292,206 300,222|66,306 80,304 82,316|310,354 330,350 332,372 318,376`);
polys(g,`626,52 640,52 640,84 660,86 656,96 640,102 632,120 606,122 606,108 620,106 622,96|132,290 160,278 184,306 168,330 140,326|222,350 254,334 288,362 286,380 254,396 226,376|322,330 360,300 384,322 360,344 326,350|6,312 30,300 62,318 64,346 26,348|378,262 410,254 412,296 394,316 362,290|188,174 216,170 218,204 194,204|292,168 316,142 328,160 318,196 294,198|54,248 108,228 108,274 76,274|334,134 380,112 382,148 350,148`);
polys(g,`230,420 240,430 254,398 284,412 276,424 278,448 250,460 232,440|288,424 304,426 316,428 314,446 328,460 346,490 344,520 330,524 310,488 284,470`);
meshed(g,`80,452 100,428 140,420 176,410 196,374 228,400 220,426 186,446 184,466 150,462 130,450 96,452|14,368 40,362 100,384 118,404 106,420 68,416 50,400 20,388|0,476 60,462 130,466 270,468 264,488 250,492 298,506 318,530 300,550 254,556 240,570 240,584 212,580 190,610 140,638 132,602 100,590 80,600 78,620 56,622 50,590 24,560 0,546`,20,`136,530 158,528 160,544 152,560 134,556|140,582 176,570 178,552 186,576 200,588 168,598 140,596|200,548 212,526 228,522 250,538 222,566|172,478 184,470 184,500 172,500|50,486 74,486 64,500 52,500`);
polys(g,'94,490 138,482 134,546 100,552 92,530|56,590 96,580 90,600 66,624|148,466 170,466 170,510 148,510|34,524 60,524 92,566 64,570 30,556');
cells(g,`340:0-60
360:0-20,80-100,120-180
380:140-170
440:40-60
460:0-40,80-110
580:0-30
600:10-30
620:0-20,20-40
650:0-20,40-60
670:20-80
690:40-90
710:0-30`);
meshed(g,`66,640 90,640 108,630 134,640 110,664 104,690 96,706 98,740 130,800 136,846 152,872 150,940 132,960 104,966 114,950 100,926 80,920 72,900 54,890 34,840 30,816 36,790 50,780 46,764 28,758 34,720 50,714 60,690 36,690 50,676 74,674`,25,`88,872 100,864 116,866 116,880 90,880|46,738 64,740 62,748 46,750|54,704 68,702 70,724 56,726`);
polys(g,`116,872 152,874 148,942 122,948 114,940|36,800 66,804 66,844 38,842 30,824|60,970 100,962 130,958 148,944 146,954 100,970 76,980 62,978|26,970 34,966 34,972`);
polys(g,`66,752 98,752 132,808 112,842 66,842 66,790`);lines(g,'66,790 88,790 110,820 116,850|0,716 50,716');

g=sheet(690,500);
polys(g,`42,134 86,132 88,152 84,176 66,156 44,150|64,82 76,74 112,76 112,96 64,96|148,124 176,124 176,136 148,136|128,134 162,134 158,150 130,150|112,160 142,160 142,182 114,180|142,148 164,138 192,142 196,158 214,164 212,176 194,200 170,200 168,188 142,184
|192,150 198,120 212,106 242,118 240,146 214,160|180,94 208,74 222,76 236,96 226,106 200,100|222,76 246,66 260,88 236,98|254,96 268,88 280,120 278,138 260,132 262,116|256,128 282,128 280,140 258,140|88,184 112,184 112,218|114,222 138,222 166,228 166,258 138,258|138,260 160,260 160,280 156,290 146,280|156,292 168,278 184,282 178,300|184,280 206,282 206,308 180,302|206,286 236,290 240,310 226,320 206,308|202,246 236,246 230,290 204,286|204,228 248,222 258,224 238,246 204,246|190,228 206,228 202,260 192,258|200,202 216,204 250,186 256,198 226,210 216,222|248,204 270,198 270,214 252,224|266,172 280,162 290,178 276,188 264,182|276,190 292,176 306,192 272,212
|264,142 298,132 304,122 344,126 356,160 306,192 286,172|344,126 372,122 382,140 374,160 356,160|292,118 328,94 334,96 334,112 298,124|378,94 392,94 392,126 378,126|394,106 430,106 430,126 394,124|376,152 392,126 416,126 430,134 428,160|430,124 464,128 466,144 478,150 474,166 430,160|464,106 516,102 518,138 490,140 468,128|394,82 420,84 422,104 392,104|420,82 440,68 446,90 440,104 422,102|394,58 410,52 418,72 410,84 396,76|462,84 472,68 490,78 486,92 468,96
|320,60 340,64 356,92 346,96|252,50 290,40 296,52 262,66|282,46 302,42 310,62 286,60|182,18 200,14 204,46 184,46|182,44 204,44 204,60 184,58|212,-10 290,-10 290,42 212,50|310,34 334,40 334,76 312,70|328,24 346,22 350,70 330,66|346,20 368,20 368,42 348,42|372,20 402,18 404,58 374,62|330,72 350,66 358,96 336,88|152,58 168,62 166,80 152,76`);
polys(g,'228,214 236,206 248,208 250,220 230,222','#fff');
</script>
</body></html>
